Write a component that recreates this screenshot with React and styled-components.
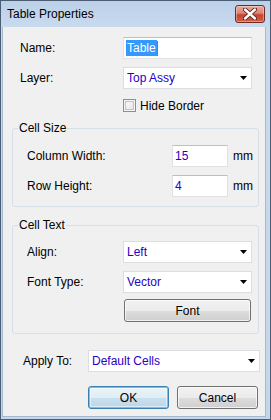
import styled, { createGlobalStyle } from "styled-components";

const GlobalStyle = createGlobalStyle`
  html, body {
    margin: 0;
    padding: 0;
    background: #ffffff;
  }
  body {
    font-family: "Liberation Sans", Arial, sans-serif;
    font-size: 12px;
    color: #000;
  }
`;

const ComboArrow = () => (
  <svg width="7" height="4" viewBox="0 0 7 4">
    <path d="M0 0 H7 L3.5 4 Z" fill="#000" />
  </svg>
);

const CloseGlyph = () => (
  <svg width="14" height="12" viewBox="0 0 14 12">
    <path
      d="M2 1.5 L12 10.5 M12 1.5 L2 10.5"
      stroke="#5a1c16"
      strokeWidth="4.2"
      strokeLinecap="round"
    />
    <path
      d="M2 1.5 L12 10.5 M12 1.5 L2 10.5"
      stroke="#ffffff"
      strokeWidth="2.4"
      strokeLinecap="round"
    />
  </svg>
);

const App = () => {
  return (
    <>
      <GlobalStyle />
      <Window>
        <TitleBar>
          <Title>Table Properties</Title>
          <CloseButton>
            <CloseGlyph />
          </CloseButton>
        </TitleBar>
        <Client>
          <TopSection>
            <Row>
              <Label width={103}>Name:</Label>
              <TextBox width={129}>
                <Selection>Table</Selection>
                <Caret />
              </TextBox>
            </Row>
            <Row>
              <Label width={103}>Layer:</Label>
              <Combo width={129}>
                <span>Top Assy</span>
                <ComboArrow />
              </Combo>
            </Row>
            <CheckRow>
              <CheckBox />
              <span>Hide Border</span>
            </CheckRow>
          </TopSection>

          <Group>
            <Legend>Cell Size</Legend>
            <GroupBody>
              <Row>
                <Label width={145}>Column Width:</Label>
                <TextBox width={56}>15</TextBox>
                <Unit>mm</Unit>
              </Row>
              <Row>
                <Label width={145}>Row Height:</Label>
                <TextBox width={56}>4</TextBox>
                <Unit>mm</Unit>
              </Row>
            </GroupBody>
          </Group>

          <Group $gap={11}>
            <Legend>Cell Text</Legend>
            <GroupBody $top={9} $bottom={11}>
              <Row>
                <Label width={96}>Align:</Label>
                <Combo width={129}>
                  <span>Left</span>
                  <ComboArrow />
                </Combo>
              </Row>
              <Row>
                <Label width={96}>Font Type:</Label>
                <Combo width={129}>
                  <span>Vector</span>
                  <ComboArrow />
                </Combo>
              </Row>
              <FontButton>Font</FontButton>
            </GroupBody>
          </Group>

          <ApplyRow>
            <Label width={65}>Apply To:</Label>
            <Combo width={172}>
              <span>Default Cells</span>
              <ComboArrow />
            </Combo>
          </ApplyRow>

          <ButtonBar>
            <PushButton $default>OK</PushButton>
            <PushButton>Cancel</PushButton>
          </ButtonBar>
        </Client>
      </Window>
    </>
  );
};

const Window = styled.div`
  box-sizing: border-box;
  width: 271px;
  height: 420px;
  display: flex;
  flex-direction: column;
  padding: 0 4px 2px 2px;
  border: 1px solid #4b5d73;
  background: linear-gradient(180deg, #bcd0e8 0px, #c9daee 26px, #c4d6ec 100%);
`;

const TitleBar = styled.div`
  height: 26px;
  flex-shrink: 0;
  display: flex;
  align-items: flex-start;
  justify-content: space-between;
`;

const Title = styled.div`
  padding: 6px 0 0 4px;
  font-size: 12px;
  line-height: 14px;
  color: #000;
`;

const CloseButton = styled.div`
  box-sizing: border-box;
  width: 30px;
  height: 18px;
  margin: 4px 1px 0 0;
  display: flex;
  align-items: center;
  justify-content: center;
  border: 1px solid #6f2a22;
  border-radius: 3px;
  background: linear-gradient(
    180deg,
    #e9a99c 0%,
    #dc8474 45%,
    #c8442f 55%,
    #d0604a 100%
  );
  box-shadow: inset 0 0 0 1px rgba(255, 255, 255, 0.35);
`;

const Client = styled.div`
  flex: 1;
  display: flex;
  flex-direction: column;
  padding: 10px 6px 0 9px;
  background: #f0f0f0;
  border: 1px solid #a6b9cf;
  border-top: none;
  margin-left: -1px;
`;

const TopSection = styled.div`
  display: flex;
  flex-direction: column;
  gap: 8px;
  padding-left: 8px;
`;

const Row = styled.div`
  display: flex;
  align-items: center;
  height: 22px;
`;

const Label = styled.div`
  width: ${(p) => p.width}px;
  flex-shrink: 0;
  line-height: 14px;
`;

const Field = styled.div`
  box-sizing: border-box;
  width: ${(p) => p.width}px;
  height: 22px;
  flex-shrink: 0;
  display: flex;
  align-items: center;
  background: #ffffff;
  border: 1px solid #dfe3e8;
  border-top-color: #b9c0c9;
  color: #2a00c6;
  line-height: 14px;
`;

const TextBox = styled(Field)`
  padding-left: 2px;
`;

const Combo = styled(Field)`
  justify-content: space-between;
  padding: 0 4px 0 3px;
  border-color: #dadde2;
`;

const Selection = styled.span`
  background: #3399ff;
  color: #ffffff;
  padding: 1px 1px;
`;

const Caret = styled.span`
  width: 1px;
  height: 15px;
  background: #c36a1a;
`;

const Unit = styled.div`
  margin-left: 5px;
  line-height: 14px;
`;

const CheckRow = styled.div`
  display: flex;
  align-items: center;
  gap: 4px;
  height: 13px;
  margin: 2px 0 0 103px;
`;

const CheckBox = styled.span`
  box-sizing: border-box;
  width: 13px;
  height: 13px;
  border: 1px solid #8e8f8f;
  background: #f4f4f4;
  box-shadow: inset 0 0 0 1px #f4f4f4, inset 0 0 0 2px #c2c4c6,
    inset -3px -3px 4px #e6e6e6;
`;

const Group = styled.fieldset`
  margin: ${(p) => p.$gap ?? 9}px 0 0 0;
  padding: 0;
  min-width: 0;
  border: 1px solid #d5dfe5;
  border-radius: 3px;
`;

const Legend = styled.legend`
  margin-left: 5px;
  padding: 0 1px;
  line-height: 14px;
  font-size: 12px;
`;

const GroupBody = styled.div`
  display: flex;
  flex-direction: column;
  gap: 8px;
  padding: ${(p) => p.$top ?? 10}px 0 ${(p) => p.$bottom ?? 9}px 14px;
`;

const ButtonBase = styled.div`
  box-sizing: border-box;
  display: flex;
  align-items: center;
  justify-content: center;
  height: 23px;
  border: 1px solid #707070;
  border-radius: 3px;
  background: linear-gradient(
    180deg,
    #f2f2f2 0%,
    #ebebeb 50%,
    #dddddd 51%,
    #cfcfcf 100%
  );
  box-shadow: inset 0 0 0 1px rgba(255, 255, 255, 0.7);
  line-height: 14px;
`;

const FontButton = styled(ButtonBase)`
  width: 127px;
  margin: -2px 0 0 97px;
`;

const ApplyRow = styled(Row)`
  margin-top: 16px;
  padding-left: 11px;
`;

const ButtonBar = styled.div`
  display: flex;
  justify-content: flex-end;
  gap: 8px;
  margin-top: 14px;
  padding-right: 1px;
`;

const PushButton = styled(ButtonBase)`
  width: 81px;
  border-color: ${(p) => (p.$default ? "#3c7fb1" : "#707070")};
  background: ${(p) =>
    p.$default
      ? "linear-gradient(180deg, #eaf4fa 0%, #dfedf5 50%, #c9e0ee 51%, #bcd6e7 100%)"
      : "linear-gradient(180deg, #f2f2f2 0%, #ebebeb 50%, #dddddd 51%, #cfcfcf 100%)"};
  box-shadow: ${(p) =>
    p.$default
      ? "inset 0 0 0 1px #48d4fa, inset 0 0 0 2px rgba(255,255,255,0.5)"
      : "inset 0 0 0 1px rgba(255, 255, 255, 0.7)"};
`;

export default App;
